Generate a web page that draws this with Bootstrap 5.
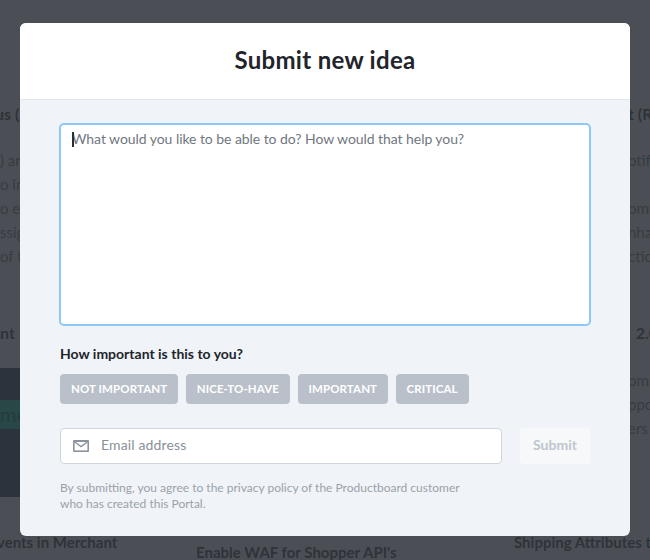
<!doctype html>
<html lang="en">
<head>
<meta charset="utf-8">
<title>Submit new idea</title>
<link href="https://cdn.jsdelivr.net/npm/bootstrap@5.3.0/dist/css/bootstrap.min.css" rel="stylesheet">
<style>
html,body{height:560px;overflow:hidden}
body{font-family:"Lato","Liberation Sans",sans-serif;background:#fff;color:#21252b}
.portal{height:560px;overflow:hidden;color:#9a9da2}
.portal-top{height:530px}
.strip-l{width:20px;overflow:hidden;white-space:nowrap}
.strip-r{width:22px;overflow:hidden;white-space:nowrap}
.ln{font-size:15px;line-height:24px;height:24px;margin:0}
.ln-b{font-weight:700;font-size:15px;color:#6f7277}
.strip-l .ln-b,.strip-r .ln-b{font-size:16px}
.cut-a{text-indent:-5px}
.cut-b{text-indent:-3px}
.gap-a{margin-top:102px}
.gap-b{margin-top:22px}
.gap-c{margin-top:53px}
.gap-d{margin-top:23px}
.pic{height:129px;background:#5e7784;padding-top:32px}
.pic-band{height:29px;line-height:29px;background:#4fd6b6;font-size:20px;color:#3f9a8a;overflow:hidden}
.portal-bottom{height:30px;white-space:nowrap}
.bot-a{width:196px;flex:none}
.bot-b{width:318px;flex:none;margin-top:10px}
.bot-c{flex:none}
.backdrop-layer{position:absolute;inset:0;background:rgba(30,35,43,.8);z-index:1}
.idea-modal{position:absolute;left:20px;top:23px;width:610px;height:513px;z-index:2;background:#f0f4f8;border-radius:6px;overflow:hidden;border:0}
.idea-head{height:77px;background:#fff;border-bottom:1px solid #e2e7ec;display:flex;align-items:center;justify-content:center}
.idea-head h1{font-size:24px;font-weight:700;margin:0 0 2px;color:#21252b;letter-spacing:.3px}
.idea-body{padding:23px 40px 0}
.idea-field{position:relative;margin:0 -1px}
.idea-text{display:block;width:100%;height:203px;border:2px solid #8cc8f8;border-radius:5px;padding:3px 11px;font-size:14px;letter-spacing:-.06px;line-height:21px;resize:none;box-shadow:none;color:#6c7480;background:#fff}
.idea-text::placeholder{color:#717780;opacity:1}
.idea-text:focus{border-color:#8cc8f8;box-shadow:none}
.idea-caret{position:absolute;left:13px;top:9px;width:1.5px;height:15px;background:#2b3038}
.idea-q{font-size:14px;font-weight:700;margin:18px 0 0;line-height:20px;color:#21252b}
.idea-opts{margin-top:10px;gap:7.5px}
.idea-opt{background:#b9c0ca;color:#fff;border:0;border-radius:4px;height:30px;padding:0 11px;font-size:11.5px;font-weight:700;line-height:30px;letter-spacing:.1px}
.idea-row{margin-top:24px;gap:18px}
.idea-mail{width:442px;height:36px;background:#fff;border:1px solid #ced5dc;border-radius:4px;padding:0 12px}
.idea-mail svg{flex:none}
.idea-mail input{border:0;outline:0;padding:0;font-size:14px;letter-spacing:.15px;background:transparent;margin-left:12px;margin-top:-3px;box-shadow:none;color:#717780}
.idea-mail input::placeholder{color:#8a9099;opacity:1}
.btn.idea-send,.btn.idea-send:disabled{width:70px;height:36px;background:#f6f8fa;border:0;border-radius:4px;color:#c0c6ce;font-size:14px;font-weight:700;padding:0 0 3px;opacity:1}
.idea-note{margin:16px 0 0;font-size:12px;line-height:16px;color:#9ba1aa}
</style>
</head>
<body>
<div class="portal">
  <div class="portal-top d-flex justify-content-between">
    <div class="strip-l">
      <p class="ln ln-b gap-a cut-a">us (Retail)</p>
      <p class="ln gap-b">) and the</p>
      <p class="ln">o in the</p>
      <p class="ln">o enable</p>
      <p class="ln">ssign</p>
      <p class="ln">of the</p>
      <p class="ln ln-b gap-c">nt</p>
      <div class="pic gap-d"><div class="pic-band">ment</div></div>
    </div>
    <div class="strip-r">
      <p class="ln ln-b gap-a">t (Retail)</p>
      <p class="ln gap-b">otific</p>
      <p class="ln">&nbsp;</p>
      <p class="ln">omm</p>
      <p class="ln">nha</p>
      <p class="ln">ctio</p>
      <p class="ln ln-b gap-c">&nbsp;&nbsp;2.0</p>
      <p class="ln gap-d">omm</p>
      <p class="ln">ppo</p>
      <p class="ln">ers s</p>
    </div>
  </div>
  <div class="portal-bottom d-flex">
    <p class="ln ln-b bot-a cut-b">vents in Merchant</p>
    <p class="ln ln-b bot-b">Enable WAF for Shopper API's</p>
    <div class="bot-c">
      <p class="ln ln-b">Shipping Attributes to</p>
      <p class="ln ln-b">Providers (Retail)</p>
    </div>
  </div>
</div>
<div class="backdrop-layer"></div>
<div class="idea-modal d-flex flex-column">
  <div class="idea-head"><h1>Submit new idea</h1></div>
  <div class="idea-body">
    <div class="idea-field">
      <textarea class="form-control idea-text" placeholder="What would you like to be able to do? How would that help you?"></textarea>
      <span class="idea-caret"></span>
    </div>
    <p class="idea-q">How important is this to you?</p>
    <div class="d-flex idea-opts">
      <button class="btn idea-opt">NOT IMPORTANT</button>
      <button class="btn idea-opt">NICE-TO-HAVE</button>
      <button class="btn idea-opt">IMPORTANT</button>
      <button class="btn idea-opt">CRITICAL</button>
    </div>
    <div class="d-flex idea-row">
      <div class="d-flex align-items-center idea-mail">
        <svg width="16" height="12" viewBox="0 0 16 12"><rect width="16" height="12" rx="1" fill="#8a939e"/><rect x="1.6" y="2" width="12.8" height="8.4" fill="#fff"/><path d="M1.5 1.8 8 6.6l6.5-4.8" fill="none" stroke="#8a939e" stroke-width="1.4"/></svg>
        <input type="text" class="flex-grow-1" placeholder="Email address">
      </div>
      <button class="btn idea-send" disabled>Submit</button>
    </div>
    <p class="idea-note">By submitting, you agree to the privacy policy of the Productboard customer<br>who has created this Portal.</p>
  </div>
</div>
<script src="https://cdn.jsdelivr.net/npm/bootstrap@5.3.0/dist/js/bootstrap.bundle.min.js"></script>
</body>
</html>
